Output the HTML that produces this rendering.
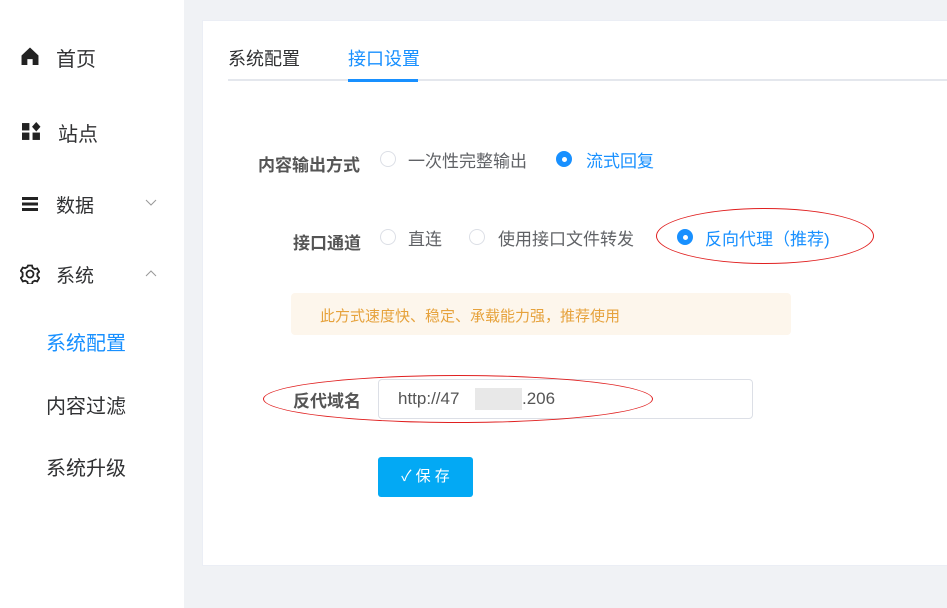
<!DOCTYPE html>
<html><head><meta charset="utf-8"><style>
*{margin:0;padding:0;box-sizing:border-box}
body{width:947px;height:608px;background:#f0f2f5;font-family:"Liberation Sans","Noto Sans CJK SC",sans-serif;position:relative;overflow:hidden;color:#303133}
.a{position:absolute;white-space:nowrap}
.side{position:absolute;left:0;top:0;width:184px;height:608px;background:#fff}
.card{position:absolute;left:202px;top:20px;width:760px;height:546px;background:#fff;border:1px solid #ebeef5}
.r{position:absolute;width:16px;height:16px;border-radius:50%;border:1px solid #dcdfe6;background:#fff}
.r.on{background:#1890ff;border-color:#1890ff}
.r.on::after{content:"";position:absolute;left:5px;top:5px;width:5px;height:5px;border-radius:50%;background:#fff}
.lbl{font-size:17px;font-weight:bold;color:#555}
.opt{font-size:17px;color:#606266}
</style></head><body>
<div class="side">
<svg class="a" style="left:21px;top:47px" width="18" height="18" viewBox="0 0 17 17"><path d="M0.5 8L8.5 0.5 16.5 8V17H11V11.5H6V17H0.5Z" fill="#222"/></svg>
<div class="a" style="left:56px;top:43px;font-size:20px">首页</div>
<svg class="a" style="left:22px;top:122px" width="19" height="19" viewBox="0 0 18 18"><rect x="0" y="1" width="7" height="7" fill="#222"/><rect x="0" y="10" width="7" height="7" fill="#222"/><rect x="10" y="10" width="7" height="7" fill="#222"/><path d="M13.5 0L17.5 4.5 13.5 9 9.5 4.5Z" fill="#222"/></svg>
<div class="a" style="left:58px;top:118px;font-size:20px">站点</div>
<svg class="a" style="left:22px;top:197px" width="16" height="14" viewBox="0 0 16 14"><rect y="0" width="16" height="3" fill="#222"/><rect y="5.5" width="16" height="3" fill="#222"/><rect y="11" width="16" height="3" fill="#222"/></svg>
<div class="a" style="left:56px;top:191px;font-size:19px">数据</div>
<svg class="a" style="left:145px;top:199px" width="12" height="8"><path d="M1 1L6 6 11 1" stroke="#999" fill="none"/></svg>
<svg class="a" style="left:20px;top:264px" width="20" height="20" viewBox="0 0 20 20"><circle cx="10" cy="10" r="3.5" stroke="#222" stroke-width="1.8" fill="none"/><path d="M8 1.5h4l.6 2.4 2.2 1.2 2.4-.7 2 3.4-1.8 1.7v2.8l1.8 1.7-2 3.4-2.4-.7-2.2 1.2-.6 2.4H8l-.6-2.4-2.2-1.2-2.4.7-2-3.4 1.8-1.7V8.6L.8 6.9l2-3.4 2.4.7 2.2-1.2z" stroke="#222" stroke-width="1.8" fill="none"/></svg>
<div class="a" style="left:56px;top:261px;font-size:19px">系统</div>
<svg class="a" style="left:145px;top:269px" width="12" height="8"><path d="M1 7L6 2 11 7" stroke="#999" fill="none"/></svg>
<div class="a" style="left:46px;top:327px;font-size:20px;color:#1890ff">系统配置</div>
<div class="a" style="left:46px;top:390px;font-size:20px">内容过滤</div>
<div class="a" style="left:46px;top:452px;font-size:20px">系统升级</div>
</div>
<div class="card"></div>
<div class="a" style="left:228px;top:45px;font-size:18px;color:#303133">系统配置</div>
<div class="a" style="left:348px;top:45px;font-size:18px;color:#1890ff">接口设置</div>
<div class="a" style="left:228px;top:79px;width:719px;height:2px;background:#e4e7ed"></div>
<div class="a" style="left:348px;top:79px;width:70px;height:3px;background:#1890ff"></div>

<div class="a lbl" style="left:258px;top:151px">内容输出方式</div>
<div class="r" style="left:380px;top:151px"></div>
<div class="a opt" style="left:408px;top:147px">一次性完整输出</div>
<div class="r on" style="left:556px;top:151px"></div>
<div class="a opt" style="left:586px;top:147px;color:#1890ff">流式回复</div>

<div class="a lbl" style="left:293px;top:229px">接口通道</div>
<div class="r" style="left:380px;top:229px"></div>
<div class="a opt" style="left:408px;top:225px">直连</div>
<div class="r" style="left:469px;top:229px"></div>
<div class="a opt" style="left:498px;top:225px">使用接口文件转发</div>
<div class="r on" style="left:677px;top:229px"></div>
<div class="a opt" style="left:705px;top:225px;color:#1890ff">反向代理（推荐)</div>
<div class="a" style="left:656px;top:208px;width:218px;height:56px;border:1px solid #e02020;border-radius:50%"></div>

<div class="a" style="left:291px;top:293px;width:500px;height:42px;background:#fdf6ec;border-radius:4px"></div>
<div class="a" style="left:320px;top:305px;font-size:15px;color:#e6a23c">此方式速度快、稳定、承载能力强，推荐使用</div>

<div class="a lbl" style="left:293px;top:387px">反代域名</div>
<div class="a" style="left:378px;top:379px;width:375px;height:40px;border:1px solid #dcdfe6;border-radius:4px;background:#fff"></div>
<div class="a" style="left:398px;top:389px;font-size:17px;color:#555">http://47</div>
<div class="a" style="left:475px;top:388px;width:47px;height:22px;background:#e8e8e8"></div>
<div class="a" style="left:522px;top:389px;font-size:17px;color:#555">.206</div>
<div class="a" style="left:263px;top:375px;width:390px;height:48px;border:1px solid #e02020;border-radius:50%"></div>

<div class="a" style="left:378px;top:457px;width:95px;height:40px;background:#03a9f4;border-radius:3px;color:#fff;font-size:15px;text-align:center;line-height:40px">✓ 保 存</div>
</body></html>
